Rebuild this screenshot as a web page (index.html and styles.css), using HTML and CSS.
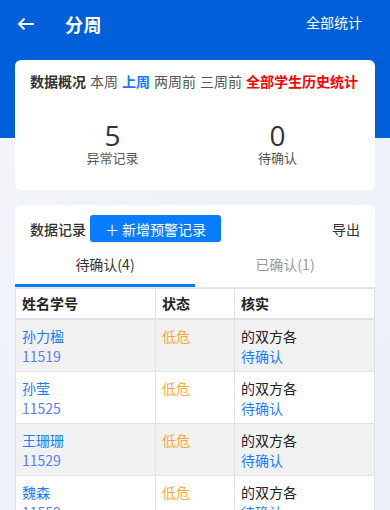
FILE: index.html
```html
<!DOCTYPE html>
<html lang="zh">
<head>
<meta charset="utf-8">
<link rel="stylesheet" href="styles.css">
</head>
<body>
<div class="page">
  <div class="hero">
    <div class="topbar">
      <span class="back"><svg width="18" height="14" viewBox="0 0 18 14"><path d="M17 7H2M7.5 1.5L2 7l5.5 5.5" fill="none" stroke="#fff" stroke-width="1.8"/></svg></span>
      <span class="title">分周</span>
      <span class="all">全部统计</span>
    </div>
  </div>
  <div class="card overview">
    <div class="ov-head">
      <span class="ov-title">数据概况</span>
      <span class="wk">本周</span>
      <span class="wk active">上周</span>
      <span class="wk">两周前</span>
      <span class="wk">三周前</span>
      <span class="wk hist">全部学生历史统计</span>
    </div>
    <div class="stats">
      <div class="stat"><div class="num">5</div><div class="lbl">异常记录</div></div>
      <div class="stat"><div class="num">0</div><div class="lbl">待确认</div></div>
    </div>
  </div>
  <div class="card records">
    <div class="rec-head">
      <span class="rec-title">数据记录</span>
      <span class="add-btn">＋ 新增预警记录</span>
      <span class="export">导出</span>
    </div>
    <div class="tabs">
      <div class="tab on">待确认(4)</div>
      <div class="tab">已确认(1)</div>
    </div>
    <table class="tbl">
      <thead>
        <tr><th class="c1">姓名学号</th><th class="c2">状态</th><th class="c3">核实</th></tr>
      </thead>
      <tbody>
        <tr class="odd"><td><div class="blue">孙力楹</div><div class="id">11519</div></td><td class="warn">低危</td><td><div>的双方各</div><div class="blue">待确认</div></td></tr>
        <tr><td><div class="blue">孙莹</div><div class="id">11525</div></td><td class="warn">低危</td><td><div>的双方各</div><div class="blue">待确认</div></td></tr>
        <tr class="odd"><td><div class="blue">王珊珊</div><div class="id">11529</div></td><td class="warn">低危</td><td><div>的双方各</div><div class="blue">待确认</div></td></tr>
        <tr><td><div class="blue">魏森</div><div class="id">11559</div></td><td class="warn">低危</td><td><div>的双方各</div><div class="blue">待确认</div></td></tr>
      </tbody>
    </table>
  </div>
</div>
</body>
</html>
```

FILE: styles.css
```css
* { box-sizing: border-box; }
html, body { margin: 0; padding: 0; }
body {
  width: 390px;
  height: 510px;
  overflow: hidden;
  font-family: "Noto Sans CJK SC", "Noto Sans", sans-serif;
  background: linear-gradient(135deg, #f3f5fa 0%, #eceff8 100%);
  color: #222;
}
.page { position: relative; }
.hero {
  height: 138px;
  background: #005fd9;
  margin-bottom: -78px;
}
.topbar {
  height: 48px;
  display: flex;
  align-items: center;
  padding: 0 16px 0 17px;
  color: #fff;
}
.back { width: 18px; height: 14px; display: flex; }
.title { font-size: 18px; font-weight: 700; margin-left: 30px; letter-spacing: 0.5px; }
.all { margin-left: auto; font-size: 14px; margin-right: 12px; margin-top: -5px; }
.card {
  position: relative;
  background: #fff;
  margin: 0 15px;
  border-radius: 6px;
}
.overview { height: 130px; padding: 9px 15px 0; }
.ov-head { display: flex; align-items: center; font-size: 14px; height: 24px; white-space: nowrap; }
.ov-title { font-weight: 700; color: #333; margin-right: 4px; }
.wk { color: #555; margin-right: 4px; }
.wk.active { color: #1677ff; font-weight: 700; }
.wk.hist { color: #ff0000; font-weight: 700; margin-right: 0; }
.stats { display: flex; margin-top: 28px; }
.stat { flex: 1; text-align: center; }
.num { font-size: 28px; line-height: 28px; color: #333; font-family: "Open Sans", "Noto Sans", sans-serif; }
.lbl { font-size: 13px; line-height: 16px; color: #555; margin-top: 1px; }
.records { margin-top: 15px; padding-top: 10px; }
.rec-head { display: flex; align-items: center; height: 27px; padding: 0 15px; font-size: 14px; }
.rec-title { color: #333; font-weight: 500; }
.add-btn {
  margin-left: 4px;
  width: 131px;
  height: 27px;
  background: #0a7cff;
  color: #fff;
  border-radius: 3px;
  display: flex;
  align-items: center;
  justify-content: center;
  font-size: 14px;
  box-shadow: 0 1px 2px rgba(0,0,0,0.1);
}
.export { margin-left: auto; color: #333; }
.tabs { display: flex; margin-top: 8px; height: 38px; border-bottom: 1px solid #e5e5e5; }
.tab { flex: 1; text-align: center; font-size: 14px; color: #999; padding-top: 4px; }
.tab.on { color: #333; border-bottom: 3px solid #0a7cff; }
.tbl {
  width: 100%;
  border-collapse: collapse;
  font-size: 14px;
  table-layout: fixed;
}
.tbl th, .tbl td {
  border: 1px solid #dfe1e6;
  text-align: left;
  vertical-align: top;
  padding: 6px 6px 5px;
  line-height: 20px;
}
.tbl th { font-weight: 700; color: #222; padding: 4px 6px; height: 30px; border-bottom: 2px solid #dfe1e6; }
.tbl td { height: 52px; padding-top: 6px; }
.c1 { width: 140px; }
.c2 { width: 79px; }
.tbl tr.odd td { background: #f1f1f1; }
.blue { color: #1e7bff; }
.id { color: #5c7cff; }
.warn { color: #ffa838; }
```
